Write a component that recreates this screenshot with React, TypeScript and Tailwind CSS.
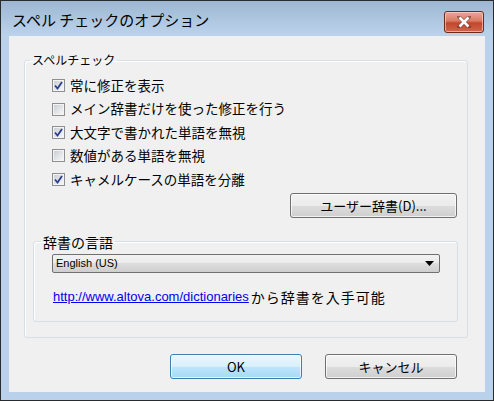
const jp = "font-['Noto_Sans_CJK_JP',sans-serif]";

function Check({ checked, label }: { checked: boolean; label: string }) {
  return (
    <div className="flex h-[23.4px] items-center">
      <span className="flex h-[13px] w-[13px] items-center justify-center border border-[#8e8f8f] bg-white">
        <span className="flex h-[11px] w-[11px] items-center justify-center border border-[#f4f4f4] bg-gradient-to-br from-[#cbcfd5] to-[#f6f6f6]">
          {checked && (
            <svg width="9" height="9" viewBox="0 0 9 9">
              <path d="M1 4.5 L3.5 7.5 L8 1" fill="none" stroke="#2a3d8f" strokeWidth="1.8" />
            </svg>
          )}
        </span>
      </span>
      <span className="ml-[5px] text-[13.5px] leading-none text-black">{label}</span>
    </div>
  );
}

function Btn({ children, primary, className }: { children: React.ReactNode; primary?: boolean; className?: string }) {
  return (
    <div
      className={
        "flex h-[25px] items-center justify-center rounded-[3px] border text-[13px] text-black shadow-[inset_0_0_0_1px_rgba(255,255,255,0.7)] " +
        (primary
          ? "border-[#3c7fb1] bg-[linear-gradient(#eaf6fd_0%,#d9f0fc_50%,#bee6fd_50%,#a7d9f5_100%)] "
          : "border-[#707070] bg-[linear-gradient(#f2f2f2_0%,#ebebeb_50%,#dddddd_50%,#cfcfcf_100%)] ") +
        (className ?? "")
      }
    >
      {children}
    </div>
  );
}

export default function App() {
  return (
    <div className={"flex h-[401px] w-[494px] flex-col border border-[#2b2b2b] bg-[#b9d1ea] " + jp}>
      {/* title bar */}
      <div className="flex h-[35px] items-start bg-[linear-gradient(#9db7d2,#b3cbe4_70%,#bad2ea)] pl-[11px] pr-[9px]">
        <span className="mt-[11px] text-[15px] leading-none text-black">スペル チェックのオプション</span>
        <div className="ml-auto mt-[10px] flex h-[22px] w-[40px] items-center justify-center rounded-[3px] border border-[#6d2a1d] bg-[linear-gradient(#e9a99a_0%,#d97a64_45%,#c0472c_55%,#d2664c_100%)] shadow-[inset_0_0_0_1px_rgba(255,220,210,0.6)]">
          <svg width="14" height="12" viewBox="0 0 14 12">
            <path d="M2 1 L12 11 M12 1 L2 11" stroke="#5a2a20" strokeWidth="4" strokeLinecap="square" opacity="0.5" />
            <path d="M2.5 1.5 L11.5 10.5 M11.5 1.5 L2.5 10.5" stroke="#fff" strokeWidth="2.6" />
          </svg>
        </div>
      </div>

      {/* client area */}
      <div className="mx-[8px] flex flex-1 flex-col bg-[#f0f0f0] pl-[15px] pt-[17px]">
        <fieldset className="mr-[17px] h-[285px] rounded-[3px] border border-[#d5dfe5] shadow-[inset_1px_1px_0_#fff]">
          <legend className="ml-[5px] px-[2px] text-[12px] leading-[14px] text-black">スペルチェック</legend>
          <div className="pl-[27px] pr-[10px] pt-[7px]">
            <div className="flex flex-col">
              <Check checked label="常に修正を表示" />
              <Check checked={false} label="メイン辞書だけを使った修正を行う" />
              <Check checked label="大文字で書かれた単語を無視" />
              <Check checked={false} label="数値がある単語を無視" />
              <Check checked label="キャメルケースの単語を分離" />
            </div>
            <div className="mt-[2px] flex justify-end">
              <Btn className="w-[167px]">ユーザー辞書(D)...</Btn>
            </div>
          </div>
          <fieldset className="ml-[8px] mr-[9px] mt-[17px] h-[87px] rounded-[3px] border border-[#d5dfe5] shadow-[inset_1px_1px_0_#fff]">
            <legend className="ml-[7px] px-[2px] text-[14px] leading-[14px] text-black">辞書の言語</legend>
            <div className="pl-[18px] pr-[17px] pt-[5px]">
              <div className="flex h-[19px] items-center rounded-[2px] border border-[#707070] bg-[linear-gradient(#f2f2f2_0%,#ebebeb_50%,#dddddd_50%,#cfcfcf_100%)] pl-[3px] pr-[5px]">
                <span className="font-['Liberation_Sans',sans-serif] text-[11px] text-black">English (US)</span>
                <svg className="ml-auto" width="9" height="5" viewBox="0 0 9 5">
                  <path d="M0 0 H9 L4.5 5 Z" fill="#000" />
                </svg>
              </div>
              <div className="mt-[17px] flex items-center pl-[1px] leading-none">
                <span className="font-['Liberation_Sans',sans-serif] text-[13px] text-[#0000ee] underline">http://www.altova.com/dictionaries</span>
                <span className="ml-[2px] text-[14px] tracking-[1px] text-black">から辞書を入手可能</span>
              </div>
            </div>
          </fieldset>
        </fieldset>
        <div className="mt-[16px] flex justify-end gap-[23px] pr-[28px]">
          <Btn primary className="w-[132px]">OK</Btn>
          <Btn className="w-[132px]">キャンセル</Btn>
        </div>
      </div>
      <div className="h-[8px]" />
    </div>
  );
}
